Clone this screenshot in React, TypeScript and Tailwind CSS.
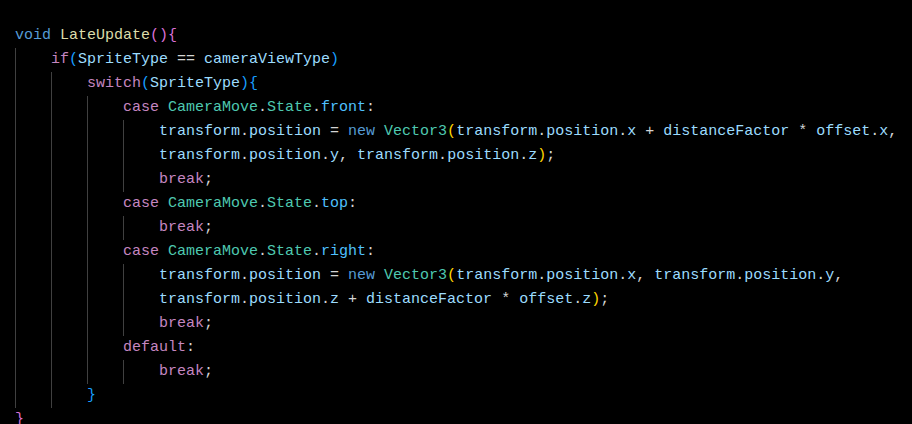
import React from "react";

type Tok = [string, string];

const K = "text-[#569cd6]";
const F = "text-[#dcdcaa]";
const C = "text-[#c586c0]";
const V = "text-[#9cdcfe]";
const T = "text-[#4ec9b0]";
const E = "text-[#4fc1ff]";
const W = "text-[#d4d4d4]";
const B1 = "text-[#da70d6]";
const B2 = "text-[#179fff]";
const B3 = "text-[#ffd700]";

// dotted path of variables, dots in white
const v = (s: string): Tok[] => {
  const parts = s.split(".");
  const out: Tok[] = [];
  parts.forEach((p, i) => {
    if (i > 0) out.push([W, "."]);
    out.push([V, p]);
  });
  return out;
};

const caseLine = (m: string): Tok[] => [
  [C, "case"],
  [W, " "],
  [T, "CameraMove"],
  [W, "."],
  [T, "State"],
  [W, "."],
  [E, m],
  [W, ":"],
];

const brk: Tok[] = [
  [C, "break"],
  [W, ";"],
];

const lines: { indent: number; toks: Tok[] }[] = [
  { indent: 0, toks: [[K, "void"], [W, " "], [F, "LateUpdate"], [B1, "(){"]] },
  {
    indent: 1,
    toks: [[C, "if"], [B2, "("], [V, "SpriteType"], [W, " == "], [V, "cameraViewType"], [B2, ")"]],
  },
  { indent: 2, toks: [[C, "switch"], [B2, "("], [V, "SpriteType"], [B2, "){"]] },
  { indent: 3, toks: caseLine("front") },
  {
    indent: 4,
    toks: [
      ...v("transform.position"),
      [W, " = "],
      [K, "new"],
      [W, " "],
      [T, "Vector3"],
      [B3, "("],
      ...v("transform.position.x"),
      [W, " + "],
      [V, "distanceFactor"],
      [W, " * "],
      ...v("offset.x"),
      [W, ","],
    ],
  },
  {
    indent: 4,
    toks: [...v("transform.position.y"), [W, ", "], ...v("transform.position.z"), [B3, ")"], [W, ";"]],
  },
  { indent: 4, toks: brk },
  { indent: 3, toks: caseLine("top") },
  { indent: 4, toks: brk },
  { indent: 3, toks: caseLine("right") },
  {
    indent: 4,
    toks: [
      ...v("transform.position"),
      [W, " = "],
      [K, "new"],
      [W, " "],
      [T, "Vector3"],
      [B3, "("],
      ...v("transform.position.x"),
      [W, ", "],
      ...v("transform.position.y"),
      [W, ","],
    ],
  },
  {
    indent: 4,
    toks: [
      ...v("transform.position.z"),
      [W, " + "],
      [V, "distanceFactor"],
      [W, " * "],
      ...v("offset.z"),
      [B3, ")"],
      [W, ";"],
    ],
  },
  { indent: 4, toks: brk },
  { indent: 3, toks: [[C, "default"], [W, ":"]] },
  { indent: 4, toks: brk },
  { indent: 2, toks: [[B2, "}"]] },
  { indent: 0, toks: [[B1, "}"]] },
];

export default function App() {
  return (
    <div
      className="w-[912px] h-[424px] overflow-hidden bg-[#000000] pt-[24px] pl-[15px] text-[15px] leading-6 whitespace-pre"
      style={{ fontFamily: '"Liberation Mono", "DejaVu Sans Mono", monospace' }}
    >
      {lines.map((ln, i) => (
        <div key={i} className="flex h-6 items-stretch">
          {Array.from({ length: ln.indent }).map((_, k) => (
            <span key={k} className="w-9 shrink-0 border-l border-[#404040]" />
          ))}
          <span>
            {ln.toks.map(([c, t], j) => (
              <span key={j} className={c}>
                {t}
              </span>
            ))}
          </span>
        </div>
      ))}
    </div>
  );
}
